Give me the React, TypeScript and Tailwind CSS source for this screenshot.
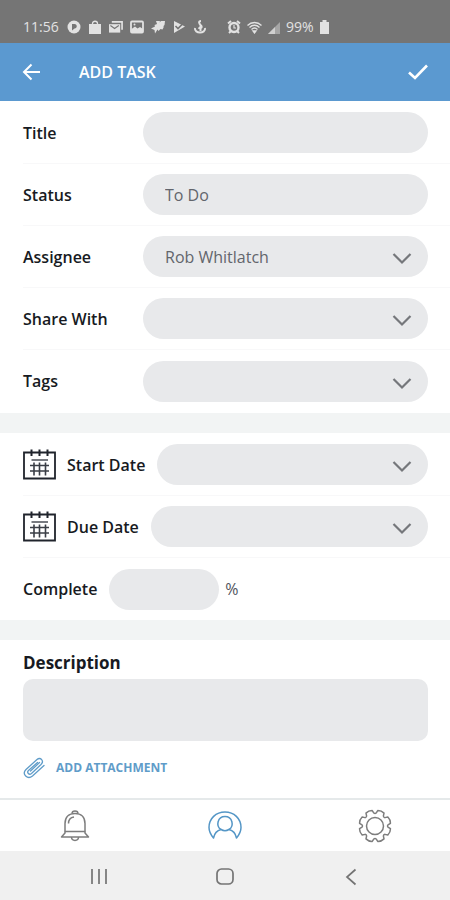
import { useState } from "react";
import type { ReactNode } from "react";

const fieldClass =
  "h-[41px] w-full min-w-0 appearance-none rounded-full bg-[#e8e9eb] px-[22px] text-[16px] text-[#62656c] outline-none";

function CalendarIcon() {
  return (
    <svg className="h-[32px] w-[33px] shrink-0" viewBox="0 0 33 32" fill="none" stroke="#20242c" aria-hidden="true">
      <path d="M1 3.500H32V29.500H1Z" strokeWidth="1.8" />
      <path d="M8.5 .5V7M16.5 .5V7M24.5 .5V7" strokeWidth="2" />
      <path d="M8.500 11H25" strokeWidth="1.5" stroke="#4a4e56" />
      <path d="M7 16.500H26M7 22H26M11 13.500V26.500M16.500 13.500V26.500M22.500 13.500V26.500" strokeWidth="1.6" stroke="#3a3e46" />
    </svg>
  );
}

function ChevronIcon() {
  return (
    <svg
      className="pointer-events-none absolute top-[15px] right-[16px] h-[14px] w-[20px]"
      viewBox="0 0 20 14"
      fill="none"
      stroke="#75777b"
      strokeWidth="2.2"
      aria-hidden="true"
    >
      <path d="M1.500 3L10 11.500L18.500 3" />
    </svg>
  );
}

function BellIcon() {
  return (
    <svg className="h-[34px] w-[30px]" viewBox="0 0 30 34" fill="none" stroke="#7d7d7d" strokeWidth="1.5" aria-hidden="true">
      <path d="M12 4.500C12 1 18 1 18 4.500" />
      <path d="M5 22.500V14.500C5 8 9 4.500 15 4.500S25 8 25 14.500V22.500" />
      <path d="M5 22.500H25V24L28.500 28H1.500L5 24Z" strokeLinejoin="round" />
      <path d="M11.500 28C11.500 32.500 18.500 32.500 18.500 28" />
      <path d="M8.500 14.500C8.500 11 10.500 8.500 14 8" />
    </svg>
  );
}

function ProfileIcon() {
  return (
    <svg className="h-[30px] w-[34px]" viewBox="0 0 34 30" fill="none" stroke="#5496c6" strokeWidth="1.5" strokeLinejoin="round" aria-hidden="true">
      <path d="M5.500 27C3 24 1 20.500 1 16.500C1 7.500 8 1 17 1S33 7.500 33 16.500C33 20.500 31 24 28.500 27C27.500 22 25 19.500 21 18.500C18.500 20 15.500 20 13 18.500C9 19.500 6.500 22 5.500 27Z" />
      <path d="M13 18.500C7.500 15 9.500 5.500 17 5.500S26.500 15 21 18.500" />
    </svg>
  );
}

// Eight wide teeth with narrow notches between them
const gearPath = Array.from({ length: 8 }, (_, i) => {
  const point = (radius: number, degrees: number) => {
    const angle = ((degrees + i * 45) * Math.PI) / 180;
    return `${(17 + radius * Math.cos(angle)).toFixed(2)} ${(17 + radius * Math.sin(angle)).toFixed(2)}`;
  };
  return `${i === 0 ? "M" : "L"}${point(13, 5)}L${point(15.7, 10)}Q${point(16.8, 22.5)} ${point(15.7, 35)}L${point(13, 40)}Q${point(12, 45)} ${point(13, 50)}`;
}).join("");

function GearIcon() {
  return (
    <svg className="size-[34px]" viewBox="0 0 34 34" fill="none" stroke="#7d7d7d" strokeWidth="1.5" strokeLinejoin="round" aria-hidden="true">
      <path d={`${gearPath}Z`} />
      <circle cx="17" cy="17" r="8.5" />
    </svg>
  );
}

function StatusBar() {
  return (
    <div className="flex h-[43px] items-end bg-[#757575] pb-[7px] pl-[23px] text-[#e2e2e2]">
      <span className="w-[44px] text-[14px] leading-[18px]">11:56</span>
      <div className="flex h-[18px] items-center gap-[7px]">
        <svg className="size-[14px]" viewBox="0 0 14 14" aria-hidden="true">
          <circle cx="7" cy="7" r="6.5" fill="currentColor" />
          <path d="M5 4H7.500C10.500 4 10.500 8.500 7.500 8.500L5 10.500Z" fill="#757575" />
        </svg>
        <svg className="size-[14px]" viewBox="0 0 14 14" aria-hidden="true">
          <path d="M1 4H13V14H1Z" fill="currentColor" />
          <path d="M4.500 6V3.500C4.500 .5 9.500 .5 9.500 3.500V6" fill="none" stroke="currentColor" strokeWidth="1.3" />
        </svg>
        <svg className="size-[14px]" viewBox="0 0 15 14" aria-hidden="true">
          <path d="M3 1.500H14V10" fill="none" stroke="currentColor" strokeWidth="1.8" />
          <path d="M0 4H12V13H0Z" fill="currentColor" />
          <path d="M1.500 5.500L6 8.500L10.500 5.500" fill="none" stroke="#757575" strokeWidth="1.3" />
        </svg>
        <svg className="size-[14px]" viewBox="0 0 14 14" aria-hidden="true">
          <rect x="1" y="1.500" width="12" height="11" rx="1" fill="none" stroke="currentColor" strokeWidth="1.8" />
          <path d="M1 12L1.500 9L5 6.500L7.500 8.500L10 7L13 9V12Z" fill="currentColor" />
          <circle cx="4.500" cy="4.500" r="1" fill="currentColor" />
        </svg>
        <svg className="size-[14px]" viewBox="0 0 14 14" fill="currentColor" aria-hidden="true">
          <path d="M5 1H9L8.500 2.500L10 1H14L13.500 5L12 6.500H13L11.500 9.500L9.500 9L7.500 11L6.500 9.500L4 13.500L3.500 10L0 8.500L4 6.500L3.500 5L6 4Z" />
        </svg>
        <svg className="size-[14px]" viewBox="0 0 14 14" aria-hidden="true">
          <path d="M2 1L13 6.500L2 13Z" fill="currentColor" />
          <path d="M3.500 6L6 8.500L12 2.500" fill="none" stroke="#757575" strokeWidth="1.6" />
        </svg>
        <svg className="size-[14px]" viewBox="0 0 14 14" fill="none" stroke="currentColor" strokeWidth="2" aria-hidden="true">
          <path d="M8 1C5 1 6 4 8 5.500C10 7.500 7 9 5.500 7.500M7.500 5V11M2 8C1 14 13 14 12 8" />
        </svg>
      </div>
      <div className="ml-[20px] flex h-[18px] items-center gap-[6px]">
        <svg className="size-[14px]" viewBox="0 0 14 14" fill="none" stroke="currentColor" aria-hidden="true">
          <circle cx="7" cy="7.500" r="4.500" strokeWidth="2.4" />
          <path d="M1 3.500L4 1M13 3.500L10 1M2 13L4 11M12 13L10 11" strokeWidth="2" />
          <path d="M7 5V8H9" strokeWidth="1.2" />
        </svg>
        <svg className="h-[13px] w-[15px]" viewBox="0 0 15 13" fill="none" stroke="currentColor" strokeWidth="1.3" aria-hidden="true">
          <path d="M.5 4.500C4.500 .5 10.500 .5 14.500 4.500M2.500 6.500C5.500 3.500 9.500 3.500 12.500 6.500M4.500 8.500C6.500 6.500 8.500 6.500 10.500 8.500" />
          <path d="M6 10H9L7.500 12Z" fill="currentColor" />
        </svg>
        <svg className="h-[13px] w-[12px]" viewBox="0 0 12 13" fill="currentColor" aria-hidden="true">
          <path d="M0 13L12 1V13Z" opacity=".45" />
          <path d="M0 13L7 6V13Z" opacity=".7" />
        </svg>
        <span className="text-[14px] leading-[18px]">99%</span>
        <svg className="h-[14px] w-[9px]" viewBox="0 0 9 14" fill="currentColor" aria-hidden="true">
          <path d="M2.500 0H6.500V2H9V14H0V2H2.500Z" />
        </svg>
      </div>
    </div>
  );
}

interface FieldProps {
  id: string;
  label: string;
  value?: string;
}

function Row({ children }: { children: ReactNode }) {
  return <div className="ml-[23px] flex h-[62px] items-center border-b border-[#f8f8f9] pr-[22px] last:border-b-0">{children}</div>;
}

function Dropdown({ id, value = "" }: { id: string; value?: string }) {
  return (
    <div className="relative min-w-0 flex-1">
      <select id={id} defaultValue={value} className={fieldClass}>
        <option value={value}>{value}</option>
      </select>
      <ChevronIcon />
    </div>
  );
}

function SelectRow({ id, label, value }: FieldProps) {
  return (
    <Row>
      <label htmlFor={id} className="w-[120px] shrink-0 font-semibold">{label}</label>
      <Dropdown id={id} value={value} />
    </Row>
  );
}

function InputRow({ id, label, value }: FieldProps) {
  return (
    <Row>
      <label htmlFor={id} className="w-[120px] shrink-0 font-semibold">{label}</label>
      <input id={id} type="text" defaultValue={value} className={fieldClass} />
    </Row>
  );
}

function DateRow({ id, label }: FieldProps) {
  return (
    <Row>
      <label htmlFor={id} className="mr-[12px] flex shrink-0 items-center gap-[11px] font-semibold">
        <CalendarIcon />
        {label}
      </label>
      <Dropdown id={id} />
    </Row>
  );
}

export default function App() {
  const [description, setDescription] = useState("");

  return (
    <div className="flex min-h-screen flex-col bg-white font-['Open_Sans','Noto_Sans',sans-serif] text-[16px] text-[#171a22]">
      <StatusBar />

      <header className="flex h-[58px] items-center bg-[#5b99d0] px-[22px] text-white">
        <button type="button" aria-label="Back">
          <svg className="h-[18px] w-[19px]" viewBox="0 0 19 18" fill="none" stroke="currentColor" strokeWidth="2" aria-hidden="true">
            <path d="M18 9H2M9.500 1.500L2 9L9.500 16.500" />
          </svg>
        </button>
        <h1 className="ml-[38px] flex-1 text-[16px] font-semibold">ADD TASK</h1>
        <button type="button" aria-label="Save">
          <svg className="h-[18px] w-[20px]" viewBox="0 0 20 18" fill="none" stroke="currentColor" strokeWidth="2.6" aria-hidden="true">
            <path d="M1 9.500L7 15L19 2.500" />
          </svg>
        </button>
      </header>

      <main className="flex-1">
        {/* Task details */}
        <section className="py-[1px]">
          <InputRow id="title" label="Title" />
          <InputRow id="status" label="Status" value="To Do" />
          <SelectRow id="assignee" label="Assignee" value="Rob Whitlatch" />
          <SelectRow id="share" label="Share With" />
          <SelectRow id="tags" label="Tags" />
        </section>

        {/* Dates and progress */}
        <section className="border-t-[20px] border-b-[20px] border-[#f2f4f4] pt-[1px]">
          <DateRow id="start" label="Start Date" />
          <DateRow id="due" label="Due Date" />
          <Row>
            <label htmlFor="complete" className="mr-[12px] font-semibold">Complete</label>
            <div className="w-[110px]">
              <input id="complete" type="text" inputMode="numeric" className={fieldClass} />
            </div>
            <span className="ml-[6px] text-[#50545c]">%</span>
          </Row>
        </section>

        <section className="pt-[11px] pr-[22px] pl-[23px]">
          <label htmlFor="description" className="block text-[17px] leading-[24px] font-bold">Description</label>
          <textarea
            id="description"
            value={description}
            onChange={(e) => setDescription(e.target.value)}
            className="mt-[4px] block h-[62px] w-full resize-none rounded-[10px] bg-[#e8e9eb] p-3 outline-none"
          />
          <button type="button" className="mt-[15px] flex h-[24px] items-center gap-[11px] text-[12px] font-bold text-[#5f9cc9]">
            <svg className="size-[22px]" viewBox="0 0 22 22" fill="none" stroke="currentColor" strokeWidth="1.3" strokeLinecap="round" aria-hidden="true">
              <path d="M21 8.500L9.500 19C4.500 23-1.500 17 3 12.500L14 2.500C17.500-.5 21.500 4 18 7.500L8.500 16.500C6 18.500 3.500 15.500 5.500 13.500L14.500 5.500" />
              <path d="M16.500 5.500L7.500 14" />
            </svg>
            ADD ATTACHMENT
          </button>
        </section>
      </main>

      <nav className="grid h-[53px] grid-cols-3 border-t-2 border-[#e5e9ea]">
        <button type="button" aria-label="Notifications" className="flex items-center justify-center">
          <BellIcon />
        </button>
        <button type="button" aria-label="Profile" className="flex items-center justify-center">
          <ProfileIcon />
        </button>
        <button type="button" aria-label="Settings" className="flex items-center justify-center">
          <GearIcon />
        </button>
      </nav>

      <div className="flex h-[49px] items-center justify-center gap-[106px] bg-[#f0f0f0] text-[#747474]">
        <button type="button" aria-label="Recent apps">
          <svg className="size-[20px]" viewBox="0 0 20 20" fill="none" stroke="currentColor" strokeWidth="1.700" aria-hidden="true">
            <path d="M3 3V18M10 3V18M17 3V18" />
          </svg>
        </button>
        <button type="button" aria-label="Home">
          <svg className="size-[20px]" viewBox="0 0 20 20" fill="none" stroke="currentColor" strokeWidth="1.700" aria-hidden="true">
            <rect x="2" y="3" width="16" height="15" rx="4.500" />
          </svg>
        </button>
        <button type="button" aria-label="Back to previous app">
          <svg className="size-[20px]" viewBox="0 0 20 20" fill="none" stroke="currentColor" strokeWidth="1.700" aria-hidden="true">
            <path d="M14.500 3.500L6 11L14.500 18.500" />
          </svg>
        </button>
      </div>
    </div>
  );
}
